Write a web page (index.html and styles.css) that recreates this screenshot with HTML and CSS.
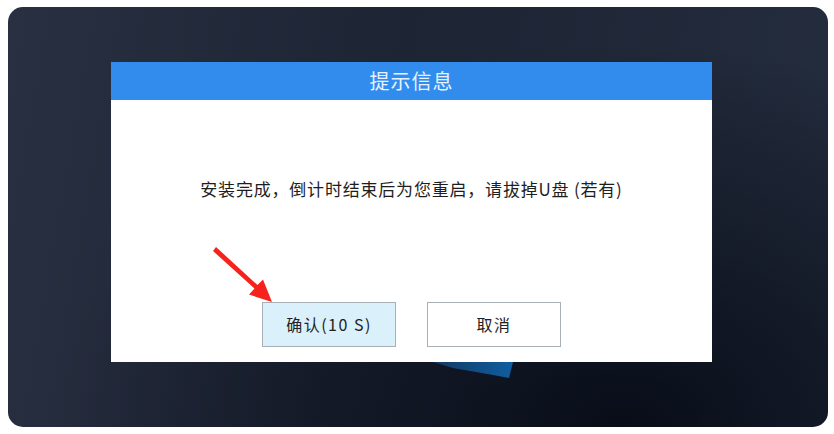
FILE: index.html
```html
<!DOCTYPE html>
<html lang="zh-CN">
<head>
    <meta charset="utf-8">
    <title>提示信息</title>
    <link rel="stylesheet" href="styles.css">
</head>
<body>
<div class="screen">
    <svg class="streak" width="100" height="30" viewBox="0 0 100 30">
        <defs>
            <linearGradient id="streakFill" x1="0" y1="0" x2="1" y2="0">
                <stop offset="0" stop-color="#123a62"/>
                <stop offset="1" stop-color="#0f5ea0"/>
            </linearGradient>
        </defs>
        <polygon points="0,0 80,0 76,16 60,13 20,6" fill="url(#streakFill)"/>
    </svg>
    <div class="dialog">
        <div class="dialog_head">提示信息</div>
        <div class="dialog_body">
            <p class="message">安装完成，倒计时结束后为您重启，请拔掉U盘 (若有)</p>
            <div class="buttons">
                <div class="btn btn-ok">确认(10 S)</div>
                <div class="btn">取消</div>
            </div>
        </div>
    </div>
    <svg class="arrow" width="70" height="65" viewBox="205 240 70 65">
        <polygon points="213,251 216,247 257.5,285 263,279.5 272,302 249,294.5 254.5,288.5" fill="#f5231c"/>
    </svg>
</div>
</body>
</html>
```

FILE: styles.css
```css
html, body {
    margin: 0;
    background-color: #fff;
    font-family: "Noto Sans CJK SC", "Noto Sans", sans-serif;
}

.screen {
    position: relative;
    margin: 7px 6px 7px 8px;
    height: 420px;
    box-sizing: border-box;
    padding: 55px 116px 0 103px;
    border-radius: 15px;
    background:
        radial-gradient(ellipse at 75% 100%, #080d18 0%, rgba(8, 13, 24, 0) 65%),
        linear-gradient(100deg, #283041 0%, #1d2434 45%, #242d3e 100%);
}

.streak {
    position: absolute;
    left: 425px;
    top: 355px;
}

.dialog {
    position: relative;
    height: 300px;
    background-color: #fff;
    display: flex;
    flex-direction: column;
}

.dialog_head {
    height: 38px;
    line-height: 38px;
    background-color: #318ced;
    color: #e6f3ff;
    text-align: center;
    font-size: 20px;
    letter-spacing: 1px;
}

.dialog_body {
    flex: 1;
    display: flex;
    flex-direction: column;
    align-items: center;
}

.message {
    margin: 79px 0 0;
    font-size: 17px;
    line-height: 20px;
    letter-spacing: 0.8px;
    color: #1e1e1e;
}

.buttons {
    display: flex;
    gap: 31px;
    margin-top: 103px;
}

.btn {
    width: 134px;
    height: 45px;
    box-sizing: border-box;
    border: 1px solid #a9b0b5;
    background-color: #fff;
    color: #222;
    font-size: 16px;
    line-height: 43px;
    letter-spacing: 1.5px;
    text-align: center;
}

.btn-ok {
    background-color: #daf0fb;
}

.arrow {
    position: absolute;
    left: 197px;
    top: 233px;
}
```
